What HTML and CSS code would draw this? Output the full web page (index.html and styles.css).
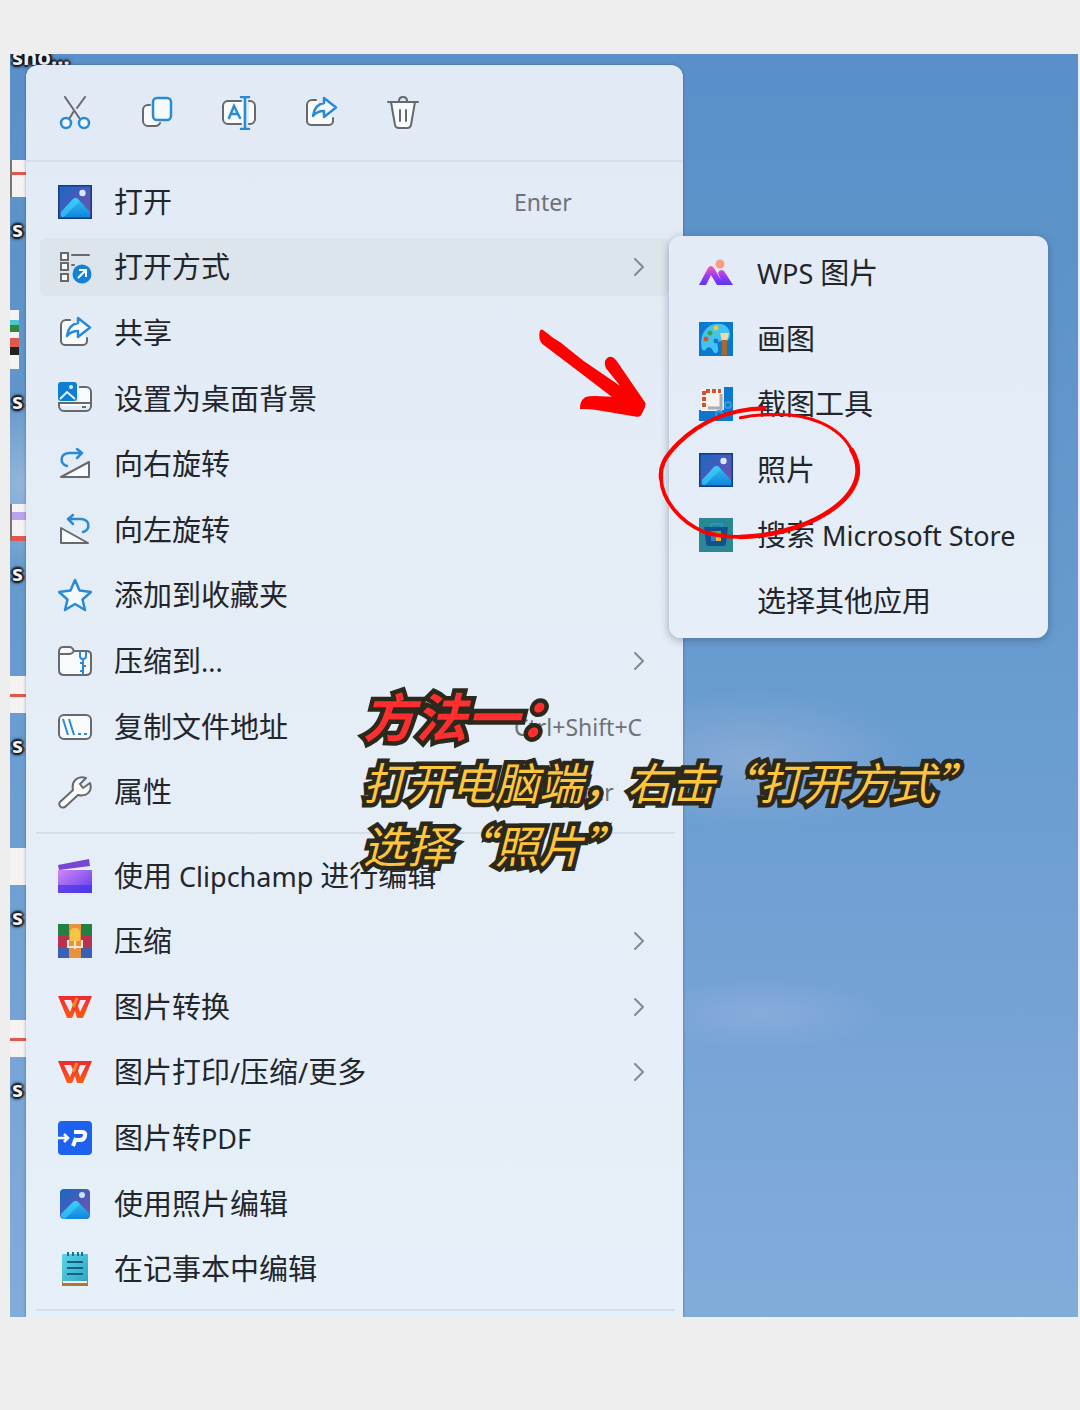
FILE: index.html
```html
<!DOCTYPE html>
<html lang="zh-CN">
<head>
    <meta charset="UTF-8" />
    <meta name="viewport" content="width=device-width, initial-scale=1.0"/>
    <title>方法一：打开方式 - 照片</title>
    <link rel="stylesheet" href="styles.css">
</head>
<body>
<!-- iconos compartidos -->
<svg class="sprite" aria-hidden="true">
    <defs>
        <linearGradient id="sky" x1="0" y1="0" x2="1" y2="1">
            <stop offset="0" stop-color="#1768c4"/><stop offset="1" stop-color="#7a4fb0"/>
        </linearGradient>
        <linearGradient id="hill" x1="0" y1="0" x2="0" y2="1">
            <stop offset="0" stop-color="#2fc0f5"/><stop offset="1" stop-color="#1286dd"/>
        </linearGradient>
        <linearGradient id="wpsRed" x1="0" y1="0" x2="0" y2="1">
            <stop offset="0" stop-color="#f0292f"/><stop offset="1" stop-color="#ff5a14"/>
        </linearGradient>
        <linearGradient id="wpsPic" x1="0" y1="0" x2="0" y2="1">
            <stop offset="0" stop-color="#f45bb0"/><stop offset=".5" stop-color="#a23cf0"/><stop offset="1" stop-color="#5a35f5"/>
        </linearGradient>
        <linearGradient id="clip" x1="0" y1="0" x2="1" y2="1">
            <stop offset="0" stop-color="#d287f5"/><stop offset="1" stop-color="#5a3aee"/>
        </linearGradient>
        <linearGradient id="note" x1="0" y1="0" x2="1" y2="1">
            <stop offset="0" stop-color="#5bd3ea"/><stop offset="1" stop-color="#2fa3c2"/>
        </linearGradient>
    </defs>
    <symbol id="i-share" viewBox="0 0 34 34">
        <path d="M12 4H8a5 5 0 0 0-5 5v16a4 4 0 0 0 4 4h18a4 4 0 0 0 4-4v-3" fill="#f8fafc" stroke="#66696d" stroke-width="2" stroke-linecap="round"/>
        <path d="M20 2l12 9.500-12 9.500v-6c-5 0-8 1-11 5 1-7 4-12 11-13z" fill="#f4fafe" stroke="#2a8ad6" stroke-width="2.500" stroke-linejoin="round"/>
    </symbol>
    <symbol id="i-photos" viewBox="0 0 34 34">
        <rect x=".75" y=".75" width="32.500" height="32.500" fill="url(#sky)" stroke="#143c80" stroke-width="1.500"/>
        <path d="M3 27l12-13q2.500-2 5 0l12 13v5H4q-2-2-1-5z" fill="url(#hill)"/>
        <path d="M3 27l12-13q2-2 4-1l3 3-16 16H4q-2-2-1-5z" fill="#43d0f7" opacity=".6"/>
        <circle cx="24.500" cy="8" r="3.200" fill="#dfe6ff"/>
    </symbol>
    <symbol id="i-wps" viewBox="0 0 34 34">
        <path fill="url(#wpsRed)" fill-rule="evenodd" d="M0 6h34l-9 22h-6l-2-7-3 7H9zM6 10l6 12 3-7-2-5zM22 10l-2 6 2 6 6-12z"/>
        <path d="M15 17l4-9" stroke="#ff8a2a" stroke-width="3"/>
    </symbol>
    <symbol id="i-chevron" viewBox="0 0 12 20">
        <path d="M2 2l8 8-8 8" fill="none" stroke="#84898f" stroke-width="2" stroke-linecap="round" stroke-linejoin="round"/>
    </symbol>
</svg>

<main class="desktop">
    <ul class="files">
        <li class="file first"><span>sho...</span></li>
        <li class="file"><i class="thumb doc"></i><span>s</span></li>
        <li class="file"><i class="thumb tall"></i><span>s</span></li>
        <li class="file"><i class="thumb doc corner"></i><span>s</span></li>
        <li class="file"><i class="thumb line"></i><span>s</span></li>
        <li class="file"><i class="thumb"></i><span>s</span></li>
        <li class="file"><i class="thumb line"></i><span>s</span></li>
    </ul>

    <nav class="menu">
        <div class="toolbar">
            <button aria-label="剪切">
                <svg class="icon" viewBox="0 0 34 34" fill="none" stroke="#66696d" stroke-width="2">
                    <path d="M7 1l15 22M27 1l-8 11M16 15l-5 8" stroke-linecap="round"/>
                    <circle cx="8" cy="27" r="5" stroke="#2a8ad6" stroke-width="2.500" fill="#f2f8fd"/>
                    <circle cx="26" cy="27" r="5" stroke="#2a8ad6" stroke-width="2.500" fill="#f2f8fd"/>
                </svg>
            </button>
            <button aria-label="复制">
                <svg class="icon" viewBox="0 0 34 34" stroke-width="2">
                    <path d="M10 9H8a5 5 0 0 0-5 5v11a5 5 0 0 0 5 5h7q4 0 5-3" fill="#f8fafc" stroke="#66696d" stroke-linecap="round"/>
                    <rect x="13" y="2" width="18" height="22" rx="4" fill="#f4f9fd" stroke="#2a8ad6" stroke-width="2.500"/>
                </svg>
            </button>
            <button aria-label="重命名">
                <svg class="icon" viewBox="0 0 34 34" fill="none" stroke="#66696d" stroke-width="2" stroke-linecap="round">
                    <path d="M21 5H6a5 5 0 0 0-5 5v13a5 5 0 0 0 5 5h15zM27 5h1a5 5 0 0 1 5 5v13a5 5 0 0 1-5 5h-1" fill="#f8fafc" stroke="none"/>
                    <path d="M19 5H6a5 5 0 0 0-5 5v13a5 5 0 0 0 5 5h13M27 5h1a5 5 0 0 1 5 5v13a5 5 0 0 1-5 5h-1"/>
                    <path d="M7 22l5-12 6 12M9 18h7M23 2v30M19 1h8M19 33h8" stroke="#2a8ad6" stroke-width="2.500"/>
                </svg>
            </button>
            <button aria-label="共享"><svg class="icon"><use href="#i-share"/></svg></button>
            <button aria-label="删除">
                <svg class="icon" viewBox="0 0 34 34" fill="none" stroke="#66696d" stroke-width="2" stroke-linecap="round">
                    <path d="M5 6l4 23a4 4 0 0 0 4 3h8a4 4 0 0 0 4-3l4-23z" fill="#f8fafc"/>
                    <path d="M2 6h30M13 5q0-4 4-4t4 4M14 14v11M20 14v11"/>
                </svg>
            </button>
        </div>

        <ul class="group main">
            <li><button class="item"><svg class="icon"><use href="#i-photos"/></svg><span class="label">打开</span><kbd>Enter</kbd></button></li>
            <li>
                <button class="item active">
                    <svg class="icon" viewBox="0 0 34 34" fill="#f8fafc" stroke="#66696d" stroke-width="2">
                        <rect x="3" y="3" width="7" height="7"/>
                        <rect x="3" y="13" width="7" height="7"/>
                        <rect x="3" y="24" width="7" height="7"/>
                        <path d="M14 5h17M14 15h2" stroke-linecap="round"/>
                        <circle cx="24" cy="24" r="9.500" fill="#1282d8" stroke="none"/>
                        <path d="M20 28l8-8M21 20h7v7" fill="none" stroke="#fff"/>
                    </svg>
                    <span class="label">打开方式</span><svg class="chevron"><use href="#i-chevron"/></svg>
                </button>
                <ul class="group submenu">
                    <li><button class="item">
                        <svg class="icon" viewBox="0 0 34 34">
                            <path d="M0 29L9 12q3-4 6 0l7 12 -3-7q2-5 6-2l9 14H18l-6-10-5 10z" fill="url(#wpsPic)"/>
                            <circle cx="21" cy="8" r="4.500" fill="#f9a07a"/>
                        </svg><span class="label"><span class="latin">WPS </span>图片</span></button></li>
                    <li><button class="item">
                        <svg class="icon" viewBox="0 0 34 34">
                            <rect width="34" height="34" fill="#0b78d0"/>
                            <path d="M3 27C0 13 7 3 17 2c9-1 14 4 14 11 0 6-5 6-8 6-5 0-5 3-4 7 1 5-3 7-5 3-2-5-6-4-7-2s-3 2-4 0z" fill="#43c4ee"/>
                            <circle cx="17" cy="6" r="2.500" fill="#e8cf3a"/>
                            <circle cx="11" cy="11" r="2.500" fill="#35a54a"/>
                            <circle cx="7" cy="17" r="2.500" fill="#d9542b"/>
                            <circle cx="17" cy="19" r="2.500" fill="#1879c9"/>
                            <path d="M21 11h9l-2 8h-5z" fill="#eed9a8"/>
                            <path d="M23 18h5v15h-5z" fill="#a8692c"/>
                        </svg><span class="label">画图</span></button></li>
                    <li><button class="item">
                        <svg class="icon" viewBox="0 0 34 34">
                            <path d="M25 0h9v34H0V23h25z" fill="#0b78d0"/>
                            <path d="M2 2h21v22H2z" fill="#f6f3f0"/>
                            <path d="M5 20V4h17" fill="none" stroke="#d3532a" stroke-width="4" stroke-dasharray="4 2"/>
                            <path d="M9 21h14M22 7v16" stroke="#a9adb0" stroke-width="3"/>
                            <circle cx="29" cy="18" r="3" fill="none" stroke="#2f9be0" stroke-width="2"/>
                            <circle cx="20" cy="27" r="3" fill="none" stroke="#2f9be0" stroke-width="2"/>
                        </svg><span class="label">截图工具</span></button></li>
                    <li><button class="item"><svg class="icon"><use href="#i-photos"/></svg><span class="label">照片</span></button></li>
                    <li><button class="item">
                        <svg class="icon" viewBox="0 0 34 34">
                            <rect width="34" height="34" fill="#2a8793"/>
                            <path d="M12 9V6h11v3" fill="none" stroke="#2496c4" stroke-width="2"/>
                            <path d="M5 9h24l-2 16q0 3-3 3H10q-3 0-3-3z" fill="#12518f"/>
                            <path d="M12 13h5v5h-5z" fill="#d9542b"/>
                            <path d="M17 13h5v5h-5z" fill="#6cae3c"/>
                            <path d="M12 18h5v5h-5z" fill="#2f7fd0"/>
                            <path d="M17 18h5v5h-5z" fill="#f2b431"/>
                        </svg><span class="label">搜索<span class="latin"> Microsoft Store</span></span></button></li>
                    <li><button class="item"><span class="icon"></span><span class="label">选择其他应用</span></button></li>
                </ul>
            </li>
            <li><button class="item"><svg class="icon"><use href="#i-share"/></svg><span class="label">共享</span></button></li>
            <li><button class="item">
                <svg class="icon" viewBox="0 0 34 34">
                    <path d="M20 5h8a5 5 0 0 1 5 5v14H1v-4h20z" fill="#f8fafc"/>
                    <path d="M21 5h7a5 5 0 0 1 5 5v14a5 5 0 0 1-5 5H6a5 5 0 0 1-5-5v-3h32M24 25h4" fill="none" stroke="#66696d" stroke-width="2"/>
                    <rect x="0" y="0" width="19" height="19" rx="3" fill="#0f7fd4"/>
                    <path d="M2 17l7-7 8 7" fill="none" stroke="#e4f2fc" stroke-width="2"/>
                    <circle cx="13" cy="5" r="2" fill="#e4f2fc"/>
                </svg><span class="label">设置为桌面背景</span></button></li>
            <li><button class="item">
                <svg class="icon" viewBox="0 0 34 34" fill="none" stroke-width="2" stroke-linejoin="round" stroke-linecap="round">
                    <path d="M3 30L31 15v15z" fill="#f8fafc" stroke="#66696d"/>
                    <path d="M9 19C2 17 1 7 11 6h13M19 2l5 4-5 5" stroke="#2a8ad6" stroke-width="2.500"/>
                </svg><span class="label">向右旋转</span></button></li>
            <li><button class="item">
                <svg class="icon" viewBox="0 0 34 34" fill="none" stroke-width="2" stroke-linejoin="round" stroke-linecap="round">
                    <path d="M30 30L3 15v15z" fill="#f8fafc" stroke="#66696d"/>
                    <path d="M25 19c7-2 8-12-2-13H10M15 2l-5 4 5 5" stroke="#2a8ad6" stroke-width="2.500"/>
                </svg><span class="label">向左旋转</span></button></li>
            <li><button class="item">
                <svg class="icon" viewBox="0 0 34 34">
                    <path d="M17 2l4.500 10.500L33 14l-8.500 7.500L27 32l-10-6-10 6 2.500-10.500L1 14l11.500-1.500z" fill="#f4f9fd" stroke="#2a8ad6" stroke-width="2.500" stroke-linejoin="round"/>
                </svg><span class="label">添加到收藏夹</span></button></li>
            <li><button class="item">
                <svg class="icon" viewBox="0 0 34 34" fill="none" stroke="#66696d" stroke-width="2">
                    <path d="M1 8q0-5 4-5h7q2 0 4 4h12q5 0 5 4v15q0 5-5 5H6q-5 0-5-5zM1 10h11q2 0 4-3" fill="#f8fafc"/>
                    <path d="M22 7v5q0 3 3 3t3-3V7M25 15v16M22 19h3M25 22h3M22 27h3" stroke="#2a8ad6"/>
                </svg><span class="label">压缩到<span class="latin">...</span></span><svg class="chevron"><use href="#i-chevron"/></svg></button></li>
            <li><button class="item">
                <svg class="icon" viewBox="0 0 34 34" fill="none" stroke-width="2">
                    <rect x="1" y="5" width="32" height="24" rx="5" fill="#f8fafc" stroke="#66696d"/>
                    <path d="M5 9l5 16M11 9l5 16M20 24h3M26 24h3" stroke="#2a8ad6"/>
                </svg><span class="label">复制文件地址</span><kbd>Ctrl+Shift+C</kbd></button></li>
            <li><button class="item">
                <svg class="icon" viewBox="0 0 34 34">
                    <path d="M2 27l13-12C13 6 20 0 28 3l-6 6 3 4 7-5c3 9-4 14-12 12L7 32c-4 2-7-2-5-5z" fill="#f8fafc" stroke="#66696d" stroke-width="2" stroke-linejoin="round"/>
                </svg><span class="label">属性</span><kbd>Alt+Enter</kbd></button></li>
        </ul>

        <hr>

        <ul class="group extra">
            <li><button class="item">
                <svg class="icon" viewBox="0 0 34 34">
                    <path d="M0 11h34v23H0z" fill="url(#clip)"/>
                    <path d="M0 26h34v8H0z" fill="#4735ea" opacity=".7"/>
                    <path d="M0 6L31 0l1 7L1 11z" fill="#7a45d0"/>
                </svg><span class="label">使用<span class="latin"> Clipchamp </span>进行编辑</span></button></li>
            <li><button class="item">
                <svg class="icon" viewBox="0 0 34 34">
                    <path d="M0 0h34v11H0z" fill="#238044"/>
                    <path d="M0 11h34v12H0z" fill="#b8324f"/>
                    <path d="M0 23h34v11H0z" fill="#3c60b8"/>
                    <path d="M11 0h12v34H11z" fill="#e8933c"/>
                    <path d="M12 17V9q0-5 5-5t5 5v8z" fill="#f6c646"/>
                    <path d="M10 16v7h14v-7M17 17v8" fill="none" stroke="#f1e3d2" stroke-width="2"/>
                </svg><span class="label">压缩</span><svg class="chevron"><use href="#i-chevron"/></svg></button></li>
            <li><button class="item"><svg class="icon"><use href="#i-wps"/></svg><span class="label">图片转换</span><svg class="chevron"><use href="#i-chevron"/></svg></button></li>
            <li><button class="item"><svg class="icon"><use href="#i-wps"/></svg><span class="label">图片打印<span class="latin">/</span>压缩<span class="latin">/</span>更多</span><svg class="chevron"><use href="#i-chevron"/></svg></button></li>
            <li><button class="item">
                <svg class="icon" viewBox="0 0 34 34">
                    <rect width="34" height="34" rx="4" fill="#1d62ee"/>
                    <path d="M0 17h9M6 13l4 4-4 4" fill="none" stroke="#fff" stroke-width="2.500"/>
                    <path d="M15 25l3-8M16 11h8q4 0 3 4t-5 4h-5" fill="none" stroke="#fff" stroke-width="4"/>
                </svg><span class="label">图片转<span class="latin">PDF</span></span></button></li>
            <li><button class="item">
                <svg class="icon" viewBox="0 0 34 34">
                    <rect x="2" y="2" width="30" height="30" rx="4" fill="url(#sky)"/>
                    <path d="M3 27l12-12q2-2 5 0l12 12q0 5-4 5H6q-4 0-3-5z" fill="url(#hill)"/>
                    <path d="M3 27l12-12q2-2 4-1l3 3L7 32q-5 0-4-5z" fill="#43d0f7" opacity=".6"/>
                    <circle cx="24" cy="8" r="3" fill="#cfe0ff"/>
                </svg><span class="label">使用照片编辑</span></button></li>
            <li><button class="item">
                <svg class="icon" viewBox="0 0 34 34">
                    <rect x="4" y="2" width="26" height="30" rx="1" fill="url(#note)"/>
                    <path d="M4 30h26v4H4z" fill="#b5733a"/>
                    <path d="M5 29h24v2H5z" fill="#f4f4f4"/>
                    <path d="M9 10h16M9 16h16M9 22h16" stroke="#17617c" stroke-width="2"/>
                    <path d="M10 0v4M15 0v4M20 0v4M24 0v4" stroke="#1e6f88" stroke-width="2"/>
                </svg><span class="label">在记事本中编辑</span></button></li>
        </ul>

        <hr>
    </nav>

    <svg class="arrow" viewBox="0 0 420 360" aria-hidden="true">
        <path fill="#f00" d="M59 64Q62 54 72 62L100 84Q122 96 145 116L190 152 300 227 258 175Q248 155 264 142 276 136 288 150L340 226 377 280 374 294 364 314Q360 322 350 320L225 299Q200 296 180 297 178 275 195 262 205 258 225 258L275 260 175 184 68 103Q54 90 59 64Z"/>
    </svg>
    <svg class="circle" viewBox="0 0 720 450" aria-hidden="true">
        <g fill="none" stroke="#f00" stroke-linecap="round">
            <path stroke-width="13" d="M373 25C270 27 180 65 115 130 70 175 60 200 63 235"/>
            <path stroke-width="11" d="M63 235C66 300 120 365 190 395 240 412 300 413 350 408"/>
            <path stroke-width="14" d="M300 411C420 408 530 370 600 310 660 255 665 200 635 150"/>
            <path stroke-width="9" d="M637 155C600 75 500 40 400 44 360 44 330 47 301 53"/>
        </g>
    </svg>

    <div class="caption">
        <h1>方法一：</h1>
        <p>打开电脑端，右击“打开方式”</p>
        <p>选择“照片”</p>
    </div>
</main>
</body>
</html>
```

FILE: styles.css
```css
* {
  box-sizing: border-box;
}

body {
  margin: 0;
  padding: 54px 2px 93px 10px;
  font-family: "Noto Sans CJK SC", sans-serif;
  background: #eeeeee;
  color: #22262b;
}

ul {
  list-style: none;
  margin: 0;
  padding: 0;
}

.sprite {
  position: absolute;
  width: 0;
  height: 0;
}

.desktop {
  position: relative;
  overflow: hidden;
  padding: 11px 0 0 16px;
  background:
    radial-gradient(ellipse 170px 70px at 740px 705px, rgba(165,185,220,0.5), transparent),
    radial-gradient(ellipse 120px 36px at 750px 960px, rgba(160,185,225,0.4), transparent),
    radial-gradient(ellipse 60px 90px at 10px 430px, rgba(180,200,225,0.6), transparent),
    linear-gradient(#5a8fc9, #5f94ca 20%, #6a9dd1 55%, #78a4d7 80%, #82acda);
}

/* iconos del escritorio */
.files {
  position: absolute;
  top: 0;
  left: 0;
}

.file {
  display: flex;
  flex-direction: column;
  justify-content: flex-end;
  gap: 21px;
  height: 172px;
  padding-bottom: 8px;
  font: bold 22px/20px "Noto Sans", sans-serif;
  color: #f2f2f2;
}

.file.first {
  height: 12px;
  padding-bottom: 0;
  margin-bottom: 8px;
}

.file span {
  padding-left: 2px;
  text-shadow: 2px 0 2px #111, -2px 0 2px #111, 0 2px 2px #111, 0 -2px 2px #111, 0 0 5px #222;
}

.thumb {
  width: 18px;
  height: 37px;
  background: #f4f2f2;
}

.thumb.doc {
  border-left: 2px solid #777;
  background: linear-gradient(transparent 12px, #e2584c 12px, #e2584c 15px, transparent 15px), #f4f2f2;
}

.thumb.corner {
  background: linear-gradient(transparent 32px, #e2584c 32px), linear-gradient(#f4f2f2 8px, #b9a4e8 8px, #b9a4e8 16px, #f4f2f2 16px);
}

.thumb.line {
  background: linear-gradient(transparent 18px, #e2584c 18px, #e2584c 21px, transparent 21px), #f4f2f2;
}

.thumb.tall {
  width: 9px;
  height: 59px;
  background: linear-gradient(#f4f2f2 10px, #4fc6cf 10px, #4fc6cf 15px, #2d8a3c 15px, #2d8a3c 22px, #f4f2f2 22px, #f4f2f2 28px, #e2584c 28px, #e2584c 37px, #222 37px, #222 45px, #f4f2f2 45px);
}

/* menu contextual */
.menu {
  position: relative;
  width: 657px;
  border-radius: 12px 12px 0 0;
  background: linear-gradient(#e2eaf5, #e5edf7 50%, #e6f0f9);
  box-shadow: 0 0 3px rgba(30,60,100,0.5);
  padding-bottom: 6px;
}

button {
  padding: 0;
  border: none;
  background: none;
  color: inherit;
  font: inherit;
  text-align: left;
  cursor: pointer;
}

.toolbar {
  display: flex;
  gap: 48px;
  padding: 31px 32px 30px;
  border-bottom: 2px solid #d5dfea;
  margin-bottom: 7px;
}

.icon {
  display: block;
  width: 34px;
  height: 34px;
}

.group {
  display: grid;
  grid-auto-rows: 1fr;
}

.main {
  min-height: 656px;
}

.extra {
  min-height: 459px;
}

.group li {
  display: flex;
  align-items: center;
  position: relative;
  padding: 0 14px;
}

.item {
  display: grid;
  grid-template-columns: 34px 1fr 136px;
  column-gap: 22px;
  align-items: center;
  width: 100%;
  height: 58px;
  padding: 0 19px 0 18px;
  border-radius: 6px;
  font-size: 29px;
  line-height: 40px;
  white-space: nowrap;
}

.item:hover,
.item.active {
  background: #dce5ec;
}

.label {
  padding-bottom: 4px;
}

.latin {
  font-family: "Noto Sans", sans-serif;
  font-size: 27px;
  line-height: 1;
}

kbd {
  font-family: "Noto Sans", sans-serif;
  font-size: 23px;
  color: #6d7278;
}

.chevron {
  width: 12px;
  height: 20px;
  justify-self: end;
  margin-right: 5px;
}

hr {
  height: 2px;
  margin: 7px 8px 9px 10px;
  border: none;
  background: #d5dfea;
}

hr:last-child {
  margin-bottom: 0;
}

.group.submenu {
  position: absolute;
  top: 1px;
  left: 643px;
  z-index: 1;
  width: 379px;
  min-height: 402px;
  padding: 5px 0 4px;
  border-radius: 12px;
  background: linear-gradient(#e2ebf6, #e6eef8);
  box-shadow: 0 2px 8px rgba(40,60,90,0.4);
}

.submenu .item {
  grid-template-columns: 34px 1fr;
  column-gap: 24px;
  padding: 0 0 0 16px;
}

/* anotaciones encima de la captura */
.arrow,
.circle,
.caption {
  position: absolute;
  z-index: 2;
  pointer-events: none;
}

.arrow {
  top: 256px;
  left: 510px;
  width: 140px;
}

.circle {
  top: 346px;
  left: 630px;
  width: 240px;
}

.caption {
  top: 626px;
  left: 353px;
  font-style: italic;
  white-space: nowrap;
  -webkit-text-stroke: 9px #2b281c;
  paint-order: stroke fill;
}

.caption h1 {
  margin: 0;
  font-size: 52px;
  line-height: 70px;
  font-weight: bold;
  color: #ff2f2f;
}

.caption p {
  margin: 0;
  font-size: 44px;
  line-height: 63px;
  color: #ffc53d;
}
```
